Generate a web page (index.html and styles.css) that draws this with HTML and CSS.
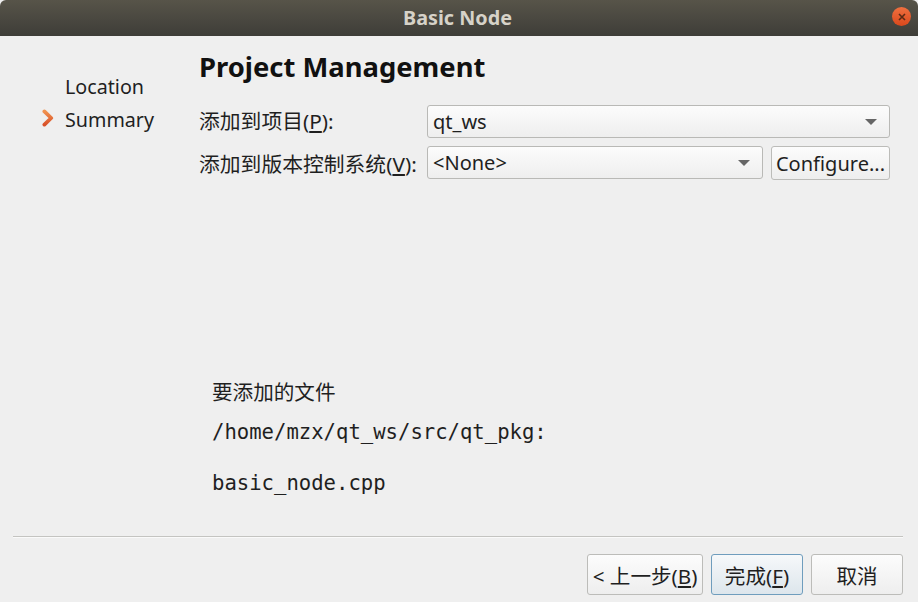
FILE: index.html
```html
<!DOCTYPE html>
<html lang="en">

<head>
  <meta charset="UTF-8">
  <title>Basic Node</title>
  <link rel="stylesheet" href="styles.css">
</head>

<body>
  <div class="window">
    <div class="titlebar">
      <span class="title">Basic Node</span>
      <span class="close">
        <svg width="10" height="10" viewBox="0 0 10 10">
          <path d="M2 2L8 8M8 2L2 8" stroke="#5a2a14" stroke-width="1.6" fill="none" />
        </svg>
      </span>
    </div>
    <div class="content">
      <ul class="steps">
        <li>Location</li>
        <li class="current">
          <svg class="arrow" width="12" height="18" viewBox="0 0 12 18">
            <defs>
              <linearGradient id="arrowFill" x1="0" y1="0" x2="0" y2="1">
                <stop offset="0" stop-color="#f0924f" />
                <stop offset="1" stop-color="#d9512a" />
              </linearGradient>
            </defs>
            <path d="M2.4 2.4L9.2 9L2.4 15.6" stroke="url(#arrowFill)" stroke-width="3.8" stroke-linejoin="round" stroke-linecap="round" fill="none" />
          </svg>
          Summary
        </li>
      </ul>
      <div class="page">
        <h1>Project Management</h1>
        <div class="form">
          <label class="label-first">添加到项目(<u>P</u>):</label>
          <div class="combo combo-wide">
            <span>qt_ws</span><i class="caret"></i>
          </div>
          <label>添加到版本控制系统(<u>V</u>):</label>
          <div class="vcs">
            <div class="combo">
              <span>&lt;None&gt;</span><i class="caret"></i>
            </div>
            <button class="btn configure">Configure...</button>
          </div>
        </div>
        <div class="files">
          <p class="files-title">要添加的文件</p>
          <p class="mono path">/home/mzx/qt_ws/src/qt_pkg:</p>
          <p class="mono">basic_node.cpp</p>
        </div>
      </div>
    </div>
    <div class="footer">
      <button class="btn back">&lt; 上一步(<u>B</u>)</button>
      <button class="btn primary">完成(<u>F</u>)</button>
      <button class="btn cancel">取消</button>
    </div>
  </div>
</body>

</html>
```

FILE: styles.css
```css
* {
  margin: 0;
  padding: 0;
  box-sizing: border-box;
  list-style: none;
}

body {
  width: 921px;
  height: 603px;
  overflow: hidden;
  background-color: #fff;
  color: #1f1f1f;
  font-family: "Noto Sans", "Noto Sans CJK SC", sans-serif;
  font-size: 20px;
}

.window {
  display: flex;
  flex-direction: column;
  width: 918px;
  height: 602px;
  background-color: #efefef;
}

.titlebar {
  display: flex;
  align-items: center;
  justify-content: center;
  position: relative;
  height: 36px;
  padding-right: 3px;
  padding-bottom: 2px;
  border-radius: 6px 6px 0 0;
  background: linear-gradient(#575449, #3e3d38);
  flex-shrink: 0;
}

.title {
  color: #d6d2c8;
  font-size: 19.8px;
  font-weight: 700;
}

.close {
  position: absolute;
  top: 7px;
  right: 7px;
  display: flex;
  align-items: center;
  justify-content: center;
  width: 19px;
  height: 19px;
  border-radius: 50%;
  background: linear-gradient(#f0703f, #d9481c);
}

.content {
  display: flex;
  flex: 1;
}

.steps {
  width: 199px;
  padding: 35px 0 0 65px;
  flex-shrink: 0;
  font-size: 19.7px;
}

.steps li {
  position: relative;
  height: 32px;
  line-height: 32px;
}

.steps .current {
  line-height: 34px;
}

.arrow {
  position: absolute;
  top: 6px;
  left: -23px;
}

.page {
  flex: 1;
}

h1 {
  height: 69px;
  padding-top: 12px;
  color: #111;
  font-size: 27.4px;
  font-weight: 700;
  line-height: 38px;
}

.form {
  display: grid;
  grid-template-columns: 228px 463px;
  row-gap: 8px;
  align-items: center;
}

.form label {
  font-size: 20.8px;
  white-space: nowrap;
}

.form .label-first {
  margin-bottom: 3px;
}

.vcs {
  display: flex;
  gap: 8px;
}

.combo {
  display: flex;
  align-items: center;
  justify-content: space-between;
  width: 336px;
  height: 33px;
  padding: 0 5px;
  border: 1px solid #b9b9b6;
  border-radius: 3px;
  background: linear-gradient(#fcfcfc, #eeeeee);
  font-size: 20px;
}

.combo-wide {
  width: 463px;
}

.caret {
  width: 0;
  height: 0;
  margin-right: 7px;
  border-top: 6px solid #666;
  border-left: 6px solid transparent;
  border-right: 6px solid transparent;
}

.btn {
  height: 34px;
  border: 1px solid #bcbcb9;
  border-radius: 3px;
  background: linear-gradient(#fcfcfc, #eeeeee);
  color: #1f1f1f;
  font-family: inherit;
  font-size: 20px;
  white-space: nowrap;
}

.configure {
  width: 119px;
}

.files {
  padding: 198px 0 0 13px;
}

.files-title {
  height: 28px;
  line-height: 28px;
  font-size: 20.6px;
}

.mono {
  font-family: "DejaVu Sans Mono", monospace;
  font-size: 20.6px;
  line-height: 28px;
}

.path {
  margin-top: 12px;
  margin-bottom: 23px;
}

.footer {
  display: flex;
  justify-content: flex-end;
  gap: 8px;
  height: 66px;
  margin: 0 15px 0 13px;
  padding-top: 17px;
  border-top: 1px solid #c4c4c1;
  box-shadow: inset 0 1px 0 #fafafa;
  flex-shrink: 0;
}

.footer .btn {
  height: 41px;
  font-size: 20.6px;
}

.back {
  width: 116px;
}

.primary {
  width: 92px;
  border-color: #6f9dbd;
  background: linear-gradient(#f6f8fa, #dde6ec);
}

.cancel {
  width: 92px;
}
```
